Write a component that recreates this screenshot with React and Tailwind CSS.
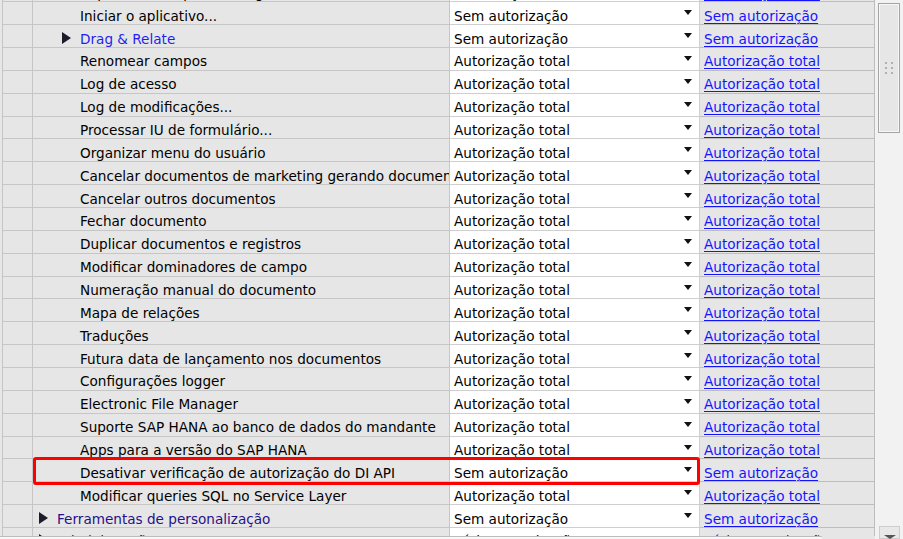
import React from "react";

const T = "Autorização total";
const S = "Sem autorização";

const rows = [
  { label: "Importar de arquivo de registro...", level: 2, value: T },
  { label: "Iniciar o aplicativo...", level: 2, value: S },
  { label: "Drag & Relate", level: 2, value: S, expand: true, kind: "blue" },
  { label: "Renomear campos", level: 2, value: T },
  { label: "Log de acesso", level: 2, value: T },
  { label: "Log de modificações...", level: 2, value: T },
  { label: "Processar IU de formulário...", level: 2, value: T },
  { label: "Organizar menu do usuário", level: 2, value: T },
  { label: "Cancelar documentos de marketing gerando documentos de estorno", level: 2, value: T },
  { label: "Cancelar outros documentos", level: 2, value: T },
  { label: "Fechar documento", level: 2, value: T },
  { label: "Duplicar documentos e registros", level: 2, value: T },
  { label: "Modificar dominadores de campo", level: 2, value: T },
  { label: "Numeração manual do documento", level: 2, value: T },
  { label: "Mapa de relações", level: 2, value: T },
  { label: "Traduções", level: 2, value: T },
  { label: "Futura data de lançamento nos documentos", level: 2, value: T },
  { label: "Configurações logger", level: 2, value: T },
  { label: "Electronic File Manager", level: 2, value: T },
  { label: "Suporte SAP HANA ao banco de dados do mandante", level: 2, value: T },
  { label: "Apps para a versão do SAP HANA", level: 2, value: T },
  { label: "Desativar verificação de autorização do DI API", level: 2, value: S, mark: true },
  { label: "Modificar queries SQL no Service Layer", level: 2, value: T },
  { label: "Ferramentas de personalização", level: 1, value: S, expand: true, kind: "purple" },
  { label: "Administração", level: 1, value: "Várias autorizações", expand: true, kind: "purple" },
];

function Row({ r }) {
  const labelColor =
    r.kind === "blue" ? "text-[#1f1fef]" : r.kind === "purple" ? "text-[#25108a]" : "text-black";
  return (
    <div className="relative flex h-[22.86px] shrink-0">
      <div className="ml-[2px] w-[31px] border-l border-r border-b border-[#c6c6c6]" />
      <div
        className={
          "w-[417px] flex items-center pt-[5px] border-r border-b border-[#c6c6c6] overflow-hidden whitespace-nowrap " +
          (r.level === 2 ? "pl-[23px]" : "pl-0")
        }
      >
        <span className="w-[24px] shrink-0 flex items-center pl-[6px] -mt-[2px]">
          {r.expand && (
            <span className="block w-0 h-0 border-y-[6px] border-y-transparent border-l-[9px] border-l-[#1c1c2c]" />
          )}
        </span>
        <span className={labelColor}>{r.label}</span>
      </div>
      <div className="w-[250px] bg-white flex border-r border-b border-[#cfcfcf] pl-[4px] pr-[7px]">
        <span className="flex items-center pt-[5px] text-black whitespace-nowrap">{r.value}</span>
        <span className="ml-auto mt-[8px] block w-0 h-0 border-x-[4.5px] border-x-transparent border-t-[5px] border-t-[#111]" />
      </div>
      <div className="w-[175px] flex items-center pt-[5px] pl-[4px] border-r border-b border-[#bdbdbd] whitespace-nowrap">
        <span className="text-[#1414ff] underline decoration-1 underline-offset-[2px]">{r.value}</span>
      </div>
      {r.mark && (
        <div className="absolute z-10 left-[33px] top-[-2.2px] w-[667px] h-[27.5px] border-[3px] border-[#ff0000] rounded-[3px]" />
      )}
    </div>
  );
}

export default function App() {
  return (
    <div className="w-[903px] h-[539px] overflow-hidden bg-[#e6e6e6] flex font-['DejaVu_Sans',sans-serif] text-[13.6px] leading-[16px]">
      <div className="w-[875px] h-full flex flex-col">
        <div className="h-[536px] overflow-hidden">
          <div className="-mt-[20.6px] flex flex-col">
            {rows.map((r, i) => (
              <Row key={i} r={r} />
            ))}
          </div>
        </div>
        <div className="h-[3px] flex">
          <div className="w-[822px] border-t border-[#bdbdbd] bg-[#f7f7f7]" />
        </div>
      </div>
      <div className="w-[28px] h-full bg-[#f2f2f2] flex flex-col pt-[3px]">
        <div className="ml-[3px] w-[22px] h-[130px] border border-[#a4a4a4] bg-[#e6e6e6] shadow-[inset_0_0_0_1px_#f7f7f7] flex items-center justify-center">
          <div className="grid grid-cols-2 gap-x-[4px] gap-y-[3px]">
            <span className="w-[2px] h-[2px] bg-[#b0b0b0]" />
            <span className="w-[2px] h-[2px] bg-[#b0b0b0]" />
            <span className="w-[2px] h-[2px] bg-[#b0b0b0]" />
            <span className="w-[2px] h-[2px] bg-[#b0b0b0]" />
            <span className="w-[2px] h-[2px] bg-[#b0b0b0]" />
            <span className="w-[2px] h-[2px] bg-[#b0b0b0]" />
          </div>
        </div>
        <div className="mt-auto ml-[4px] w-[21px] h-[13px] border border-[#cdcdcd] bg-[#e8e8e8] flex justify-center pt-[8px]">
          <span className="block w-0 h-0 border-x-[6px] border-x-transparent border-t-[4px] border-t-[#555]" />
        </div>
      </div>
    </div>
  );
}
